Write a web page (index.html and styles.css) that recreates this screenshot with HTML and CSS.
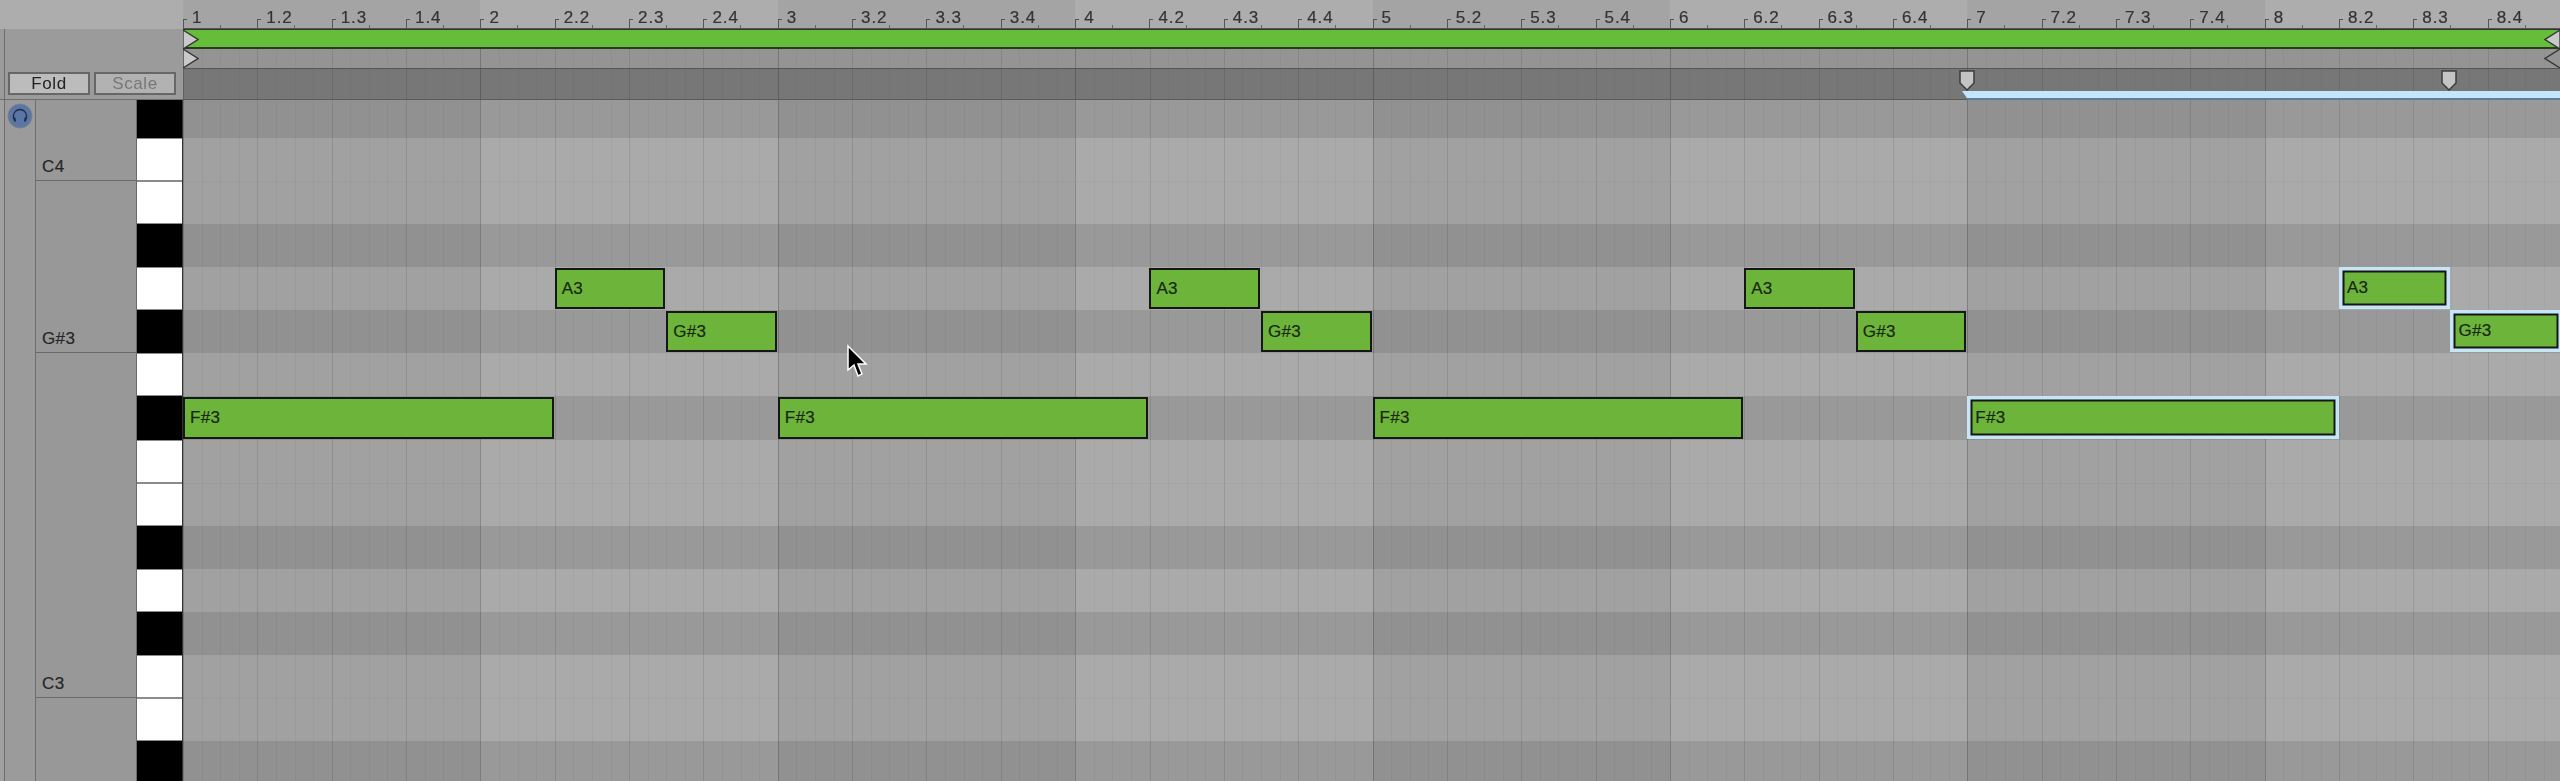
FILE: index.html
```html
<!DOCTYPE html>
<html lang="en">
<head>
<meta charset="utf-8">
<title>Piano Roll</title>
<link rel="stylesheet" href="styles.css">
</head>
<body>
<div class="app">
  <div class="corner"></div>
  <div class="ruler">
    <div class="rcell">1</div><div class="rcell">1.2</div><div class="rcell">1.3</div><div class="rcell">1.4</div>
    <div class="rcell">2</div><div class="rcell">2.2</div><div class="rcell">2.3</div><div class="rcell">2.4</div>
    <div class="rcell">3</div><div class="rcell">3.2</div><div class="rcell">3.3</div><div class="rcell">3.4</div>
    <div class="rcell">4</div><div class="rcell">4.2</div><div class="rcell">4.3</div><div class="rcell">4.4</div>
    <div class="rcell">5</div><div class="rcell">5.2</div><div class="rcell">5.3</div><div class="rcell">5.4</div>
    <div class="rcell">6</div><div class="rcell">6.2</div><div class="rcell">6.3</div><div class="rcell">6.4</div>
    <div class="rcell">7</div><div class="rcell">7.2</div><div class="rcell">7.3</div><div class="rcell">7.4</div>
    <div class="rcell">8</div><div class="rcell">8.2</div><div class="rcell">8.3</div><div class="rcell">8.4</div>
  </div>

  <div class="panel">
    <div class="panel-inner">
      <button class="btn btn-on">Fold</button>
      <button class="btn btn-off">Scale</button>
    </div>
  </div>
  <div class="tracks">
    <div class="loopbar">
      <svg class="tri" width="16" height="19" viewBox="0 0 16 19"><path d="M0 0L15 9.5L0 19Z" class="tri-fill"/></svg>
      <svg class="tri" width="16" height="19" viewBox="0 0 16 19"><path d="M16 0L1 9.5L16 19Z" class="tri-fill"/></svg>
    </div>
    <div class="startbar gridlines">
      <svg class="tri" width="16" height="19" viewBox="0 0 16 19"><path d="M0 0L15 9.5L0 19Z" class="tri-fill"/></svg>
      <svg class="tri" width="16" height="19" viewBox="0 0 16 19"><path d="M16 0L1 9.5L16 19" class="tri-line"/></svg>
    </div>
    <div class="foldbar gridlines">
      <div class="selbar"></div>
      <svg class="flag flag-a" width="16" height="21" viewBox="0 0 16 21"><path d="M1 1H15V13L8 20L1 13Z" class="flag-fill"/></svg>
      <svg class="flag flag-b" width="16" height="21" viewBox="0 0 16 21"><path d="M1 1H15V13L8 20L1 13Z" class="flag-fill"/></svg>
    </div>
  </div>

  <div class="side">
    <div class="rail"></div>
    <div class="aud">
      <svg class="phones" width="26" height="26" viewBox="0 0 26 26">
        <circle cx="13" cy="13" r="12" class="phones-bg"/>
        <path d="M6.5 15.5V13a6.5 6.5 0 0 1 13 0V15.5" class="phones-arc"/>
        <path d="M6 14.5h2.4l.6 4h-2zM17.6 14.5H20l-1 4h-2z" class="phones-cup"/>
      </svg>
    </div>
    <div class="labels pitchgrid">
      <div class="lbl span2">C4</div>
      <div class="lbl span4">G#3</div>
      <div class="lbl span8">C3</div>
      <div class="lbl span2 last"></div>
    </div>
    <div class="keys pitchgrid">
      <div class="key b"></div><div class="key w"></div><div class="key w"></div><div class="key b"></div>
      <div class="key w"></div><div class="key b"></div><div class="key w"></div><div class="key b"></div>
      <div class="key w"></div><div class="key w"></div><div class="key b"></div><div class="key w"></div>
      <div class="key b"></div><div class="key w"></div><div class="key w"></div><div class="key b"></div>
    </div>
  </div>

  <div class="roll">
    <div class="rows pitchgrid">
      <div class="row b"></div><div class="row w"></div><div class="row w"></div><div class="row b"></div>
      <div class="row w"></div><div class="row b"></div><div class="row w"></div><div class="row b"></div>
      <div class="row w"></div><div class="row w"></div><div class="row b"></div><div class="row w"></div>
      <div class="row b"></div><div class="row w"></div><div class="row w"></div><div class="row b"></div>
    </div>
    <div class="shade"></div>
    <div class="overlay gridlines"></div>
    <div class="notes pitchgrid">
      <div class="note fs n-long" style="grid-column-start:1">F#3</div>
      <div class="note a n-short" style="grid-column-start:11">A3</div>
      <div class="note gs n-short" style="grid-column-start:14">G#3</div>
      <div class="note fs n-long" style="grid-column-start:17">F#3</div>
      <div class="note a n-short" style="grid-column-start:27">A3</div>
      <div class="note gs n-short" style="grid-column-start:30">G#3</div>
      <div class="note fs n-long" style="grid-column-start:33">F#3</div>
      <div class="note a n-short" style="grid-column-start:43">A3</div>
      <div class="note gs n-short" style="grid-column-start:46">G#3</div>
      <div class="note fs n-long sel" style="grid-column-start:49">F#3</div>
      <div class="note a n-short sel" style="grid-column-start:59">A3</div>
      <div class="note gs n-short sel" style="grid-column-start:62">G#3</div>
    </div>
    <svg class="cursor" width="22" height="36" viewBox="-2 -2 22 36"><path d="M0 0L0 24L6 19L10 30L14 28L10 18L18 18Z" class="cursor-path"/></svg>
  </div>
</div>
</body>
</html>
```
FILE: styles.css
```css
* { box-sizing: border-box; }
html, body { margin: 0; padding: 0; background: #9a9a9a; overflow: hidden; }
body { width: 2560px; height: 781px; font-family: "Liberation Sans", Arial, sans-serif; color: #333; }

.app {
  display: grid;
  grid-template-columns: 183px 2377px;
  grid-template-rows: 29px 71px 681px;
  width: 2560px;
  height: 781px;
  overflow: hidden;
  filter: blur(0.45px);
}

.corner { background: #adadad; }

/* ruler */
.ruler {
  display: flex;
  overflow: hidden;
  border-bottom: 1px solid #555;
  background:
    repeating-linear-gradient(90deg, rgba(0,0,0,.05) 0 297.4px, transparent 297.4px 594.8px),
    #adadad;
}
.rcell {
  position: relative;
  flex: 0 0 74.35px;
  padding: 9px 0 0 9px;
  font-size: 17px;
  line-height: 18px;
  letter-spacing: .9px;
  color: #333;
  -webkit-text-stroke: .2px #333;
  white-space: nowrap;
}
.rcell::before {
  content: "";
  position: absolute;
  left: 0;
  top: 19px;
  width: 3px;
  height: 9px;
  border-left: 1px solid #555;
  border-top: 1px solid #555;
}
.rcell::after {
  content: "";
  position: absolute;
  left: 37px;
  bottom: 0;
  height: 3px;
  border-left: 1px solid #666;
}

/* grid lines: 16ths, beats, bars */
.gridlines {
  background-image:
    repeating-linear-gradient(90deg, rgba(0,0,0,.11) 0 1px, transparent 1px 297.4px),
    repeating-linear-gradient(90deg, rgba(0,0,0,.07) 0 1px, transparent 1px 74.35px),
    repeating-linear-gradient(90deg, rgba(0,0,0,.035) 0 1px, transparent 1px 18.5875px);
}

/* top-left panel */
.panel { padding-left: 4px; background: #9b9b9b; border-bottom: 1px solid #6e6e6e; }
.panel-inner {
  display: flex;
  align-items: flex-end;
  gap: 4px;
  height: 100%;
  padding: 0 0 4px 3px;
  border-left: 1px solid #6e6e6e;
}
.btn {
  width: 82px;
  height: 23px;
  padding: 0;
  border: 2px solid #676767;
  font-family: "Liberation Sans", Arial, sans-serif;
  font-size: 17px;
  line-height: 18px;
  letter-spacing: .6px;
}
.btn-on { background: #bcbcbc; color: #222; }
.btn-off { background: #b2b2b2; color: #777; }

/* strips above the roll */
.tracks { display: flex; flex-direction: column; }
.loopbar {
  display: flex;
  justify-content: space-between;
  height: 20px;
  background: #65bd3a;
  border-top: 1px solid #333;
  border-bottom: 2px solid #2a3a20;
}
.tri { display: block; flex: none; }
.tri-fill { fill: #c9c9c9; stroke: #333; stroke-width: 1.3; }
.tri-line { fill: none; stroke: #333; stroke-width: 1.3; }
.startbar {
  display: flex;
  justify-content: space-between;
  height: 20px;
  background-color: #949494;
  border-bottom: 1px solid #555;
}
.foldbar {
  position: relative;
  flex: 1;
  background-color: #777;
  border-bottom: 1px solid #5a5a5a;
}
.selbar {
  position: absolute;
  left: 1784px;
  right: 0;
  bottom: -1px;
  height: 9px;
  background: #c4e6fb;
  border-bottom: 2px solid #5f7c98;
}
.selbar::before {
  content: "";
  position: absolute;
  left: -5px;
  top: 0;
  border-top: 7px solid #c4e6fb;
  border-left: 5px solid transparent;
}
.flag { position: absolute; top: 1px; }
.flag-a { left: 1776px; }
.flag-b { left: 2258px; }
.flag-fill { fill: #c4c4c4; stroke: #3d3d3d; stroke-width: 1.5; }

/* left side */
.pitchgrid { display: grid; grid-template-rows: 38px repeat(15, 43.08px); }
.side { display: flex; height: 681px; overflow: hidden; }
.rail { flex: 0 0 5px; background: #a0a0a0; border-right: 1px solid #6e6e6e; }
.aud { flex: 0 0 31px; padding: 3px 0 0 2px; background: #9b9b9b; border-right: 1px solid #6e6e6e; }
.phones { display: block; }
.phones-bg { fill: #5a76a6; stroke: #7a7f8a; stroke-width: 1; }
.phones-arc { fill: none; stroke: #1f2a3d; stroke-width: 1.3; }
.phones-cup { fill: #1f2a3d; }
.labels { flex: 0 0 101px; background: #989898; border-right: 1px solid #6a6a6a; }
.lbl {
  display: flex;
  align-items: flex-end;
  padding: 0 0 4px 6px;
  font-size: 17px;
  line-height: 18px;
  letter-spacing: .4px;
  color: #262626;
  -webkit-text-stroke: .2px #262626;
  border-bottom: 1px solid #6a6a6a;
}
.lbl.last { border-bottom: 0; }
.span2 { grid-row: span 2; }
.span4 { grid-row: span 4; }
.span8 { grid-row: span 8; }
.keys { flex: 0 0 46px; border-right: 1px solid #333; }
.key.b { background: #000; }
.key.w { background: #fff; border: 1px solid #8b8b8b; border-left-width: 0; border-right-width: 0; }

/* roll */
.roll { position: relative; overflow: hidden; }
.rows { height: 100%; }
.row.b { background: #999; }
.row.w { background: #aaa; }
.row.w + .row.w { border-top: 1px solid #a5a5a5; }
.shade, .overlay { position: absolute; inset: 0; }
.shade { background: repeating-linear-gradient(90deg, rgba(0,0,0,.055) 0 297.4px, transparent 297.4px 594.8px); }
.notes {
  position: absolute;
  inset: 0;
  grid-template-columns: repeat(64, 37.175px);
}
.note {
  display: flex;
  align-items: center;
  margin: 1px 1px 1px 0;
  padding-left: 5px;
  background: #6cb53a;
  border: 2px solid #161616;
  font-size: 17px;
  letter-spacing: .3px;
  color: #1a2612;
  -webkit-text-stroke: .2px #1a2612;
  white-space: nowrap;
}
.n-long { grid-column-end: span 10; }
.n-short { grid-column-end: span 3; }
.note.a { grid-row: 5; }
.note.gs { grid-row: 6; }
.note.fs { grid-row: 8; }
.note.sel {
  margin: 0 0 1px;
  padding-left: 8px;
  border: 0;
  box-shadow: inset 0 0 0 3.5px #c6e6f7, inset 0 0 0 5.5px #161616;
}
.cursor { position: absolute; left: 663px; top: 244px; }
.cursor-path { fill: #000; stroke: #fff; stroke-width: 1.5; }
```
